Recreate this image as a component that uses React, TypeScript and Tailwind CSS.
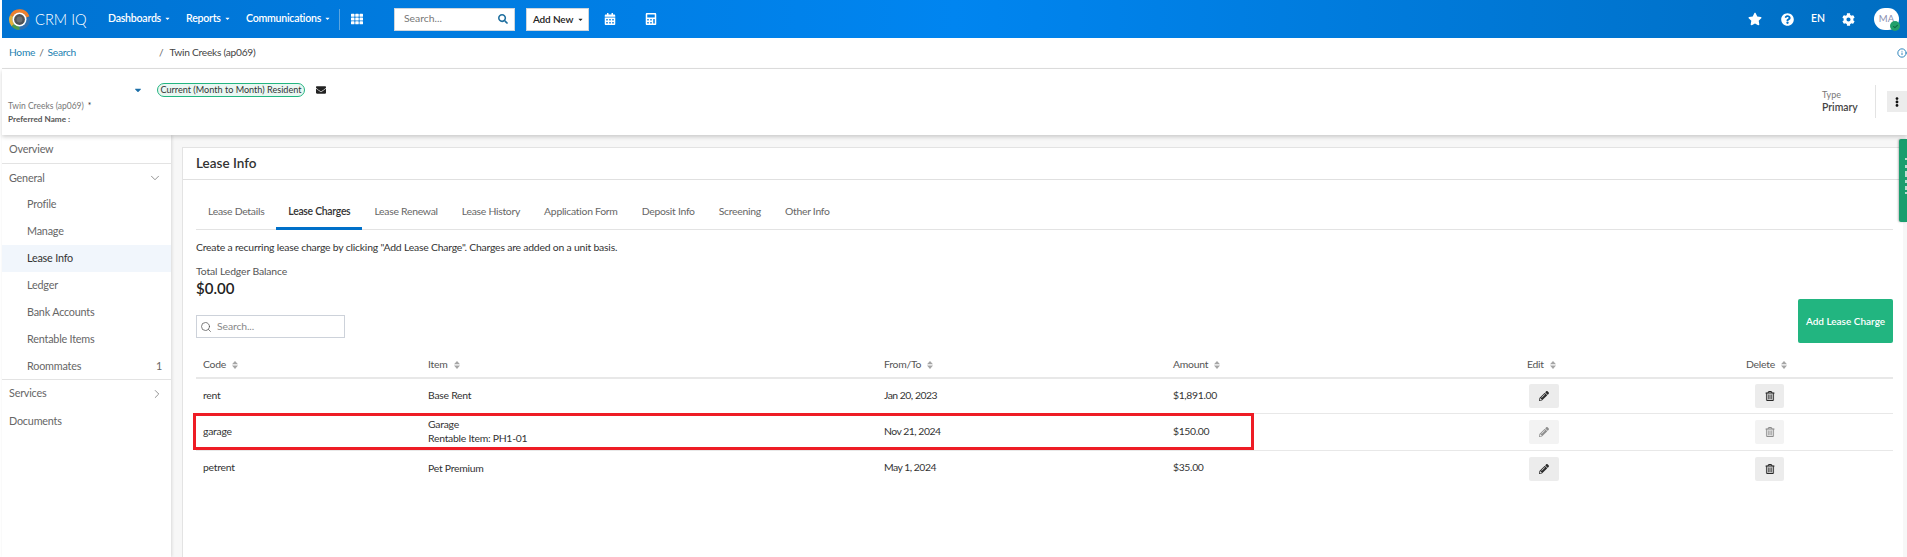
import React from "react";
import { FaStar, FaQuestionCircle, FaCog, FaEnvelope, FaTh, FaCalendarAlt, FaCalculator, FaSearch, FaPencilAlt, FaRegTrashAlt, FaCaretDown, FaEllipsisV, FaCheck } from "react-icons/fa";
import { ChevronDown, ChevronRight, Search, Info } from "lucide-react";

function Logo() {
  return (
    <svg width="23" height="21" viewBox="0 0 24 24" className="shrink-0">
      <circle cx="12" cy="12" r="10" fill="none" stroke="#2f6fb0" strokeWidth="4" />
      <path d="M3 8 A10 10 0 0 1 21.5 9" fill="none" stroke="#ee7f2d" strokeWidth="4" />
      <path d="M3 8 A10 10 0 0 0 4.5 18.5" fill="none" stroke="#e3b13a" strokeWidth="4" />
      <path d="M4.5 18.5 A10 10 0 0 0 12 22" fill="none" stroke="#4d9a4b" strokeWidth="4" />
      <circle cx="12" cy="12" r="8" fill="#fff" />
      <circle cx="12" cy="12" r="6.2" fill="#4f5358" />
      <circle cx="12" cy="12" r="3.4" fill="#6b6f74" />
    </svg>
  );
}

function SortIcon() {
  return (
    <svg width="6" height="8" viewBox="0 0 6 8" className="shrink-0 text-[#a5a5a5]">
      <path d="M0 3.2 L3 0 L6 3.2 Z M0 4.6 L6 4.6 L3 8 Z" fill="currentColor" />
    </svg>
  );
}

function NavItem({ label, className }: { label: string; className: string }) {
  return (
    <div className={`flex items-center gap-[3px] whitespace-nowrap text-[10.6px] font-semibold tracking-[-0.25px] text-white ${className}`}>
      {label}
      <FaCaretDown className="text-[7px]" />
    </div>
  );
}

function Header() {
  return (
    <header className="flex h-[38px] items-center bg-gradient-to-r from-[#0073d2] via-[#0085f0] to-[#006ec2] pl-[6px] pr-[8px] text-white">
      <Logo />
      <span className="ml-[4px] w-[73px] text-[14.7px] font-light">CRM IQ</span>
      <NavItem label="Dashboards" className="w-[78px]" />
      <NavItem label="Reports" className="w-[60px]" />
      <NavItem label="Communications" className="w-[93px]" />
      <div className="h-[21px] w-px bg-[#5aa5e0]" />
      <FaTh className="ml-[11px] text-[12px]" />
      <div className="ml-[31px] flex h-[23px] w-[121px] items-center justify-between border border-[#cfd6dc] bg-white pl-[9px] pr-[6px] text-[10.4px] text-[#777]">
        Search...
        <FaSearch className="text-[10px] text-[#1f6f9f]" />
      </div>
      <div className="ml-[11px] flex h-[23px] w-[63px] items-center gap-[4px] whitespace-nowrap border border-[#cfd6dc] bg-white pl-[6px] text-[10px] font-semibold tracking-[-0.15px] text-[#222]">
        Add New
        <FaCaretDown className="text-[7px]" />
      </div>
      <FaCalendarAlt className="ml-[15px] text-[12px]" />
      <FaCalculator className="ml-[29px] text-[12px]" />
      <div className="ml-auto flex items-center">
        <FaStar className="text-[14px]" />
        <FaQuestionCircle className="ml-[19px] text-[13px]" />
        <span className="ml-[17px] text-[10.4px] font-semibold">EN</span>
        <FaCog className="ml-[17px] text-[13px]" />
        <div className="relative ml-[19px] flex h-[22px] w-[25px] items-center justify-center rounded-full bg-white text-[9.5px] text-[#8a8fb0]">
          MA
          <span className="absolute -bottom-[1px] -right-[1px] flex h-[10px] w-[10px] items-center justify-center rounded-full bg-[#22a06b]">
            <FaCheck className="text-[5px] text-[#0e6b46]" />
          </span>
        </div>
      </div>
    </header>
  );
}

function Breadcrumb() {
  return (
    <div className="flex h-[31px] items-center border-b border-[#e0e0e0] pl-[7px] text-[10.2px] tracking-[-0.25px] text-[#444]">
      <span className="text-[#1c7fb0]">Home</span>
      <span className="ml-[4px] text-[#666]">/</span>
      <span className="ml-[4px] text-[#1c7fb0]">Search</span>
      <span className="ml-[83px] text-[#666]">/</span>
      <span className="ml-[6px]">Twin Creeks (ap069)</span>
      <Info size={10} strokeWidth={2} className="ml-auto text-[#0a6fb0]" />
    </div>
  );
}

function ResidentBar() {
  return (
    <div className="relative z-10 flex h-[66px] bg-white shadow-[0_2px_4px_rgba(0,0,0,0.18)]">
      <div className="pl-[6px]">
        <div className="mt-[14px] flex h-[14px] items-center">
          <FaCaretDown className="ml-[125px] text-[10px] text-[#1c6fa8]" />
          <div className="ml-[14px] flex h-[14px] w-[148px] items-center justify-center whitespace-nowrap rounded-full border border-[#22b580] bg-[#e9f7f2] text-[9.1px] text-[#333]">
            Current (Month to Month) Resident
          </div>
          <FaEnvelope className="ml-[11px] text-[10px] text-[#222]" />
        </div>
        <div className="mt-[2px] flex h-[14px] items-center whitespace-nowrap text-[8.5px] text-[#777]">
          Twin Creeks (ap069)
          <span className="ml-[4px] text-[#333]">*</span>
        </div>
        <div className="h-[12px] whitespace-nowrap text-[8.2px] font-bold leading-[12px] text-[#555]">Preferred Name :</div>
      </div>
      <div className="ml-auto flex items-start">
        <div className="mt-[19px] w-[53px]">
          <div className="text-[9px] leading-[13px] text-[#777]">Type</div>
          <div className="text-[10.4px] font-semibold leading-[13px] text-[#444]">Primary</div>
        </div>
        <div className="mt-[16px] h-[33px] w-px bg-[#e3e3e3]" />
        <div className="ml-[11px] mt-[22px] flex h-[21px] w-[20px] items-center justify-center bg-[#ececec]">
          <FaEllipsisV className="text-[10px] text-[#111]" />
        </div>
      </div>
    </div>
  );
}

const subItems = ["Profile", "Manage", "Lease Info", "Ledger", "Bank Accounts", "Rentable Items", "Roommates"];

function Sidebar() {
  return (
    <aside className="relative z-[1] w-[169px] shrink-0 bg-white text-[10.8px] tracking-[-0.2px] text-[#666] shadow-[1px_0_3px_rgba(0,0,0,0.12)]">
      <div className="flex h-[29px] items-center border-b border-[#e3e3e3] pl-[7px] pt-[1px]">Overview</div>
      <div className="flex h-[27px] items-center justify-between pl-[7px] pr-[9px] pt-[1px]">
        General
        <ChevronDown size={14} strokeWidth={1.2} />
      </div>
      {subItems.map((s) => (
        <div
          key={s}
          className={`flex items-center justify-between pr-[9px] ${s === "Roommates" ? "h-[26px]" : "h-[27px]"} ${s === "Lease Info" ? "bg-[#f1f6fc] pl-[25px] text-[#333]" : "pl-[25px]"}`}
        >
          {s}
          {s === "Roommates" && <span>1</span>}
        </div>
      ))}
      <div className="flex h-[28px] items-center justify-between border-t border-[#e3e3e3] pl-[7px] pr-[7px]">
        Services
        <ChevronRight size={14} strokeWidth={1.2} />
      </div>
      <div className="flex h-[27px] items-center pl-[7px] pt-[2px]">Documents</div>
    </aside>
  );
}

const tabs = ["Lease Details", "Lease Charges", "Lease Renewal", "Lease History", "Application Form", "Deposit Info", "Screening", "Other Info"];

const rows = [
  { code: "rent", item: ["Base Rent"], date: "Jan 20, 2023", amount: "$1,891.00", h: "h-[35px]" },
  { code: "garage", item: ["Garage", "Rentable Item: PH1-01"], date: "Nov 21, 2024", amount: "$150.00", h: "h-[37px]", dim: true },
  { code: "petrent", item: ["Pet Premium"], date: "May 1, 2024", amount: "$35.00", h: "h-[35px]", last: true },
];

function ActionCells({ dim, last }: { dim?: boolean; last?: boolean }) {
  const tone = dim ? "bg-[#f3f3f3] text-[#8e8e8e]" : "bg-[#ececec] text-[#2a2a2a]";
  const line = last ? "" : "border-b border-[#e8e8e8]";
  return (
    <>
      <td className={`pl-[9px] ${line}`}>
        <div className={`flex h-[24px] w-[30px] items-center justify-center rounded-[2px] ${tone}`}>
          <FaPencilAlt className="text-[10px]" />
        </div>
      </td>
      <td className={`pl-[16px] ${line}`}>
        <div className={`flex h-[24px] w-[29px] items-center justify-center rounded-[2px] ${tone}`}>
          <FaRegTrashAlt className="text-[10px]" stroke="currentColor" strokeWidth={8} />
        </div>
      </td>
    </>
  );
}

function LeaseTable() {
  return (
    <div className="relative mt-[10px]">
      <table className="w-full table-fixed border-separate border-spacing-0 text-[10.4px] tracking-[-0.25px] text-[#333]">
        <colgroup>
          <col className="w-[225px]" />
          <col className="w-[456px]" />
          <col className="w-[289px]" />
          <col className="w-[354px]" />
          <col className="w-[219px]" />
          <col className="w-[154px]" />
        </colgroup>
        <thead>
          <tr className="h-[26px]">
            {["Code", "Item", "From/To", "Amount", "Edit", "Delete"].map((h) => (
              <th key={h} className="border-b-[2px] border-[#e8e8e8] pl-[7px] text-left font-normal text-[#555]">
                <span className="flex items-center gap-[6px]">
                  {h}
                  <SortIcon />
                </span>
              </th>
            ))}
          </tr>
        </thead>
        <tbody>
          {rows.map((r) => {
            const line = r.last ? "" : "border-b border-[#e8e8e8]";
            return (
              <tr key={r.code} className={r.h}>
                <td className={`pb-[1px] pl-[7px] ${line}`}>{r.code}</td>
                <td className={`pb-[2px] pl-[7px] leading-[14px] ${line}`}>
                  {r.item.map((t) => (
                    <div key={t}>{t}</div>
                  ))}
                </td>
                <td className={`pb-[1px] pl-[7px] tracking-[-0.5px] ${line}`}>{r.date}</td>
                <td className={`pb-[1px] pl-[7px] tracking-[-0.35px] ${line}`}>{r.amount}</td>
                <ActionCells dim={r.dim} last={r.last} />
              </tr>
            );
          })}
        </tbody>
      </table>
      <div className="absolute -left-[3px] top-[60px] h-[37px] w-[1061px] border-[3px] border-[#ee1c25]" />
    </div>
  );
}

function Panel() {
  return (
    <section className="h-full border-l border-t border-[#e3e3e3] bg-white">
      <div className="flex h-[32px] items-center border-b border-[#e0e0e0] pl-[13px] text-[13.5px] font-semibold text-[#333]">Lease Info</div>
      <div className="pl-[13px] pr-[10px] pt-[15px]">
        <div className="flex h-[35px] border-b border-[#e3e3e3]">
          {tabs.map((t) => (
            <div
              key={t}
              className={`-mb-px flex h-[35px] items-center whitespace-nowrap px-[12px] text-[10.4px] tracking-[-0.27px] ${t === "Lease Charges" ? "border-b-[3px] border-[#0070c9] pt-[1px] font-semibold text-[#333]" : "pb-[2px] text-[#666]"}`}
            >
              {t}
            </div>
          ))}
        </div>
        <p className="mt-[10px] text-[10.4px] leading-[14px] tracking-[-0.2px] text-[#333]">
          Create a recurring lease charge by clicking "Add Lease Charge". Charges are added on a unit basis.
        </p>
        <div className="flex items-end justify-between">
          <div className="pb-[5px]">
            <div className="mt-[10px] text-[10.4px] leading-[14px] tracking-[-0.12px] text-[#555]">Total Ledger Balance</div>
            <div className="mt-[1px] text-[15px] font-semibold leading-[19px] text-[#222]">$0.00</div>
            <div className="mt-[17px] flex h-[23px] w-[149px] items-center border border-[#cdd2da] pl-[3px] text-[10.4px] tracking-[-0.1px] text-[#888]">
              <Search size={12} strokeWidth={1.5} className="text-[#555]" />
              <span className="ml-[5px]">Search...</span>
            </div>
          </div>
          <button className="h-[44px] w-[95px] rounded-[2px] bg-[#22b580] text-[10px] font-semibold text-white">Add Lease Charge</button>
        </div>
        <LeaseTable />
      </div>
    </section>
  );
}

export default function App() {
  return (
    <div className="flex h-[557px] w-[1907px] flex-col overflow-hidden bg-white pl-[2px] font-[Lato,sans-serif]">
      <Header />
      <Breadcrumb />
      <ResidentBar />
      <div className="relative flex min-h-0 flex-1 bg-[#f7f7f7]">
        <Sidebar />
        <main className="min-w-0 flex-1 pl-[11px] pr-[4px] pt-[12px]">
          <Panel />
        </main>
        <div className="absolute right-0 top-[4px] h-[83px] w-[8px] rounded-l-[2px] bg-[#1a9e6e] shadow-[-1px_0_2px_rgba(0,0,0,0.25)]">
          <svg width="8" height="83" viewBox="0 0 8 83">
            <path d="M6 19h2v2H6zM6 26h2v3H6zM6 32h2v6H6zM6 41h2v3H6zM6 47h2v4H6zM6 53h2v2H6z" fill="#fff" opacity="0.7" />
          </svg>
        </div>
      </div>
    </div>
  );
}
